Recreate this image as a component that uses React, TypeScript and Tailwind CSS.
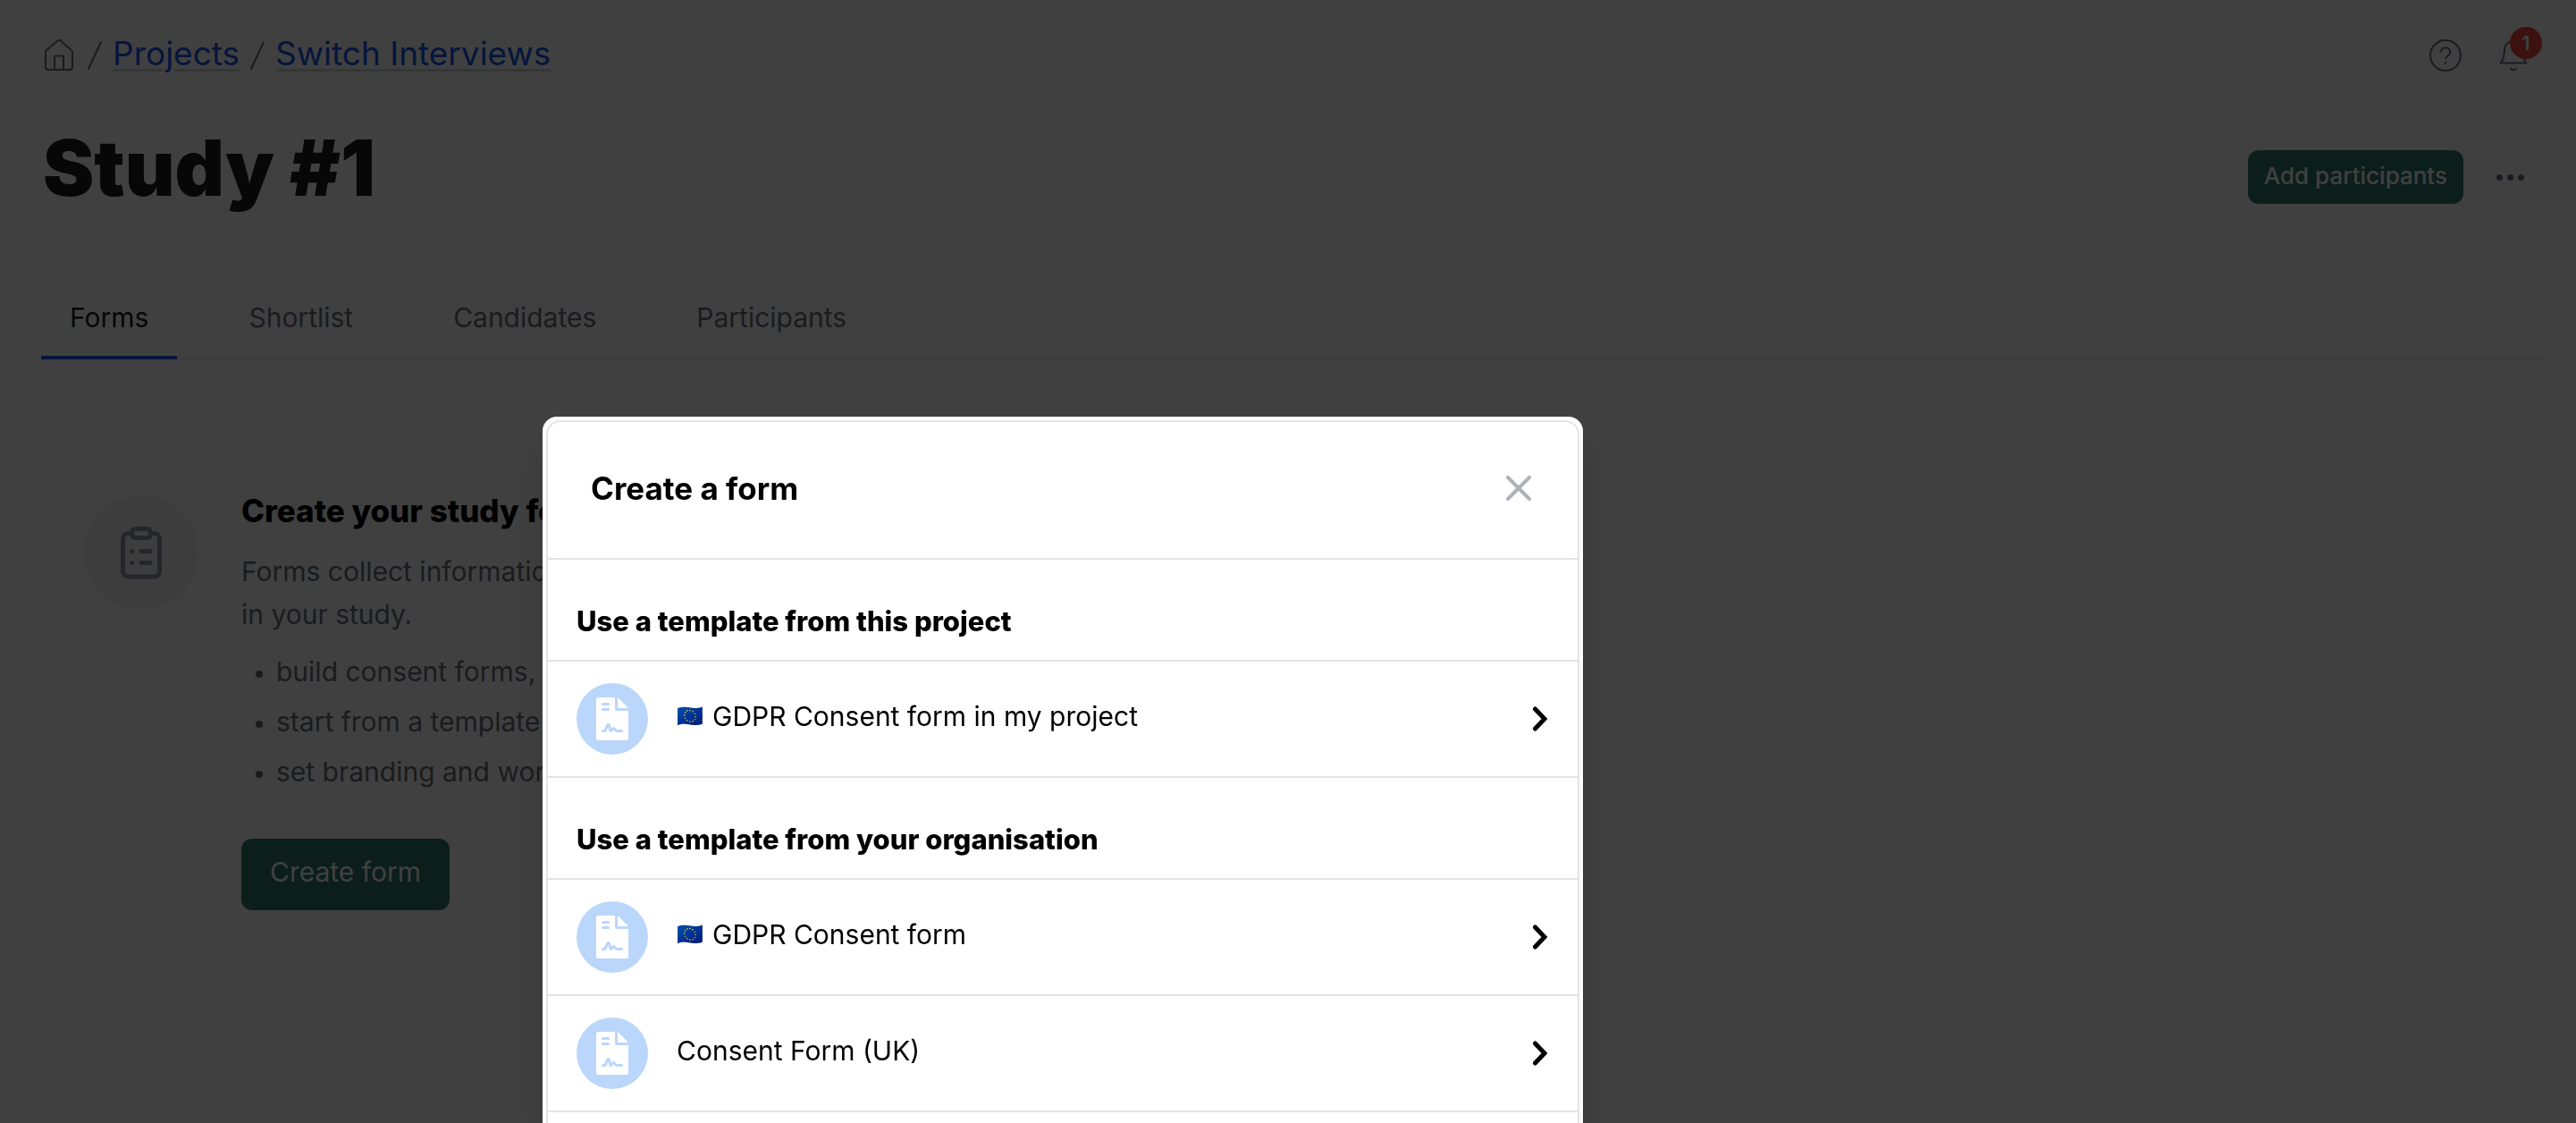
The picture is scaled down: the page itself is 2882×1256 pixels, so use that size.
const tabs = ["Forms", "Shortlist", "Candidates", "Participants"];

const sections = [
  {
    title: "Use a template from this project",
    items: [{ flag: true, name: "GDPR Consent form in my project" }],
  },
  {
    title: "Use a template from your organisation",
    items: [
      { flag: true, name: "GDPR Consent form" },
      { flag: false, name: "Consent Form (UK)" },
    ],
  },
];

function HomeIcon() {
  return (
    <svg className="h-9 w-8" viewBox="0 0 32 36" fill="none" stroke="currentColor" strokeWidth="2" strokeLinejoin="round">
      <path d="M14.2 1.7 1.9 12.2A2.6 2.6 0 0 0 1 14.2V31a3 3 0 0 0 3 3h24a3 3 0 0 0 3-3V14.200a2.600 2.600 0 0 0-.9-2L17.800 1.700a2.800 2.800 0 0 0-3.600 0Z" />
      <path d="M11 34V20.500a2 2 0 0 1 2-2h6a2 2 0 0 1 2 2V34" />
    </svg>
  );
}

function Slash() {
  return (
    <svg className="mt-1 h-9 w-4 text-[#6b6e78]" viewBox="0 0 16 36" fill="none" stroke="currentColor" strokeWidth="2" strokeLinecap="round" aria-hidden="true">
      <path d="M1 33 15 3" />
    </svg>
  );
}

function HelpIcon() {
  return (
    <svg className="size-9" viewBox="0 0 36 36" fill="none" stroke="currentColor" strokeWidth="2" strokeLinecap="round">
      <circle cx="18" cy="18" r="17" />
      <path d="M13 13.800c.2-2.600 2.300-4.500 5-4.500 3.100 0 5.200 2.100 5.200 4.900 0 2.300-1.300 3.600-3 4.700-1.400.9-2.200 1.200-2.200 2.400" />
      <circle cx="18" cy="26.300" r="1.300" fill="currentColor" stroke="none" />
    </svg>
  );
}

function BellIcon() {
  return (
    <svg className="h-9 w-8" viewBox="0 0 32 36" fill="none" stroke="currentColor" strokeWidth="2" strokeLinecap="round" strokeLinejoin="round">
      <path d="M1.500 26.500h29c-2.800-3.500-4-6.300-4.300-11.500C26 6.500 22.500 2 16 2S6 6.500 5.800 15c-.2 5.200-1.500 8-4.300 11.500Z" />
      <path d="M13 32.500c1.500 2.500 4.500 2.500 6 0" />
    </svg>
  );
}

function ClipboardIcon() {
  return (
    <svg className="h-16 w-12" viewBox="0 0 48 64" fill="none" stroke="currentColor" strokeWidth="5" strokeLinecap="round" strokeLinejoin="round">
      <path d="M13 10.500H9.500a6 6 0 0 0-6 6V53a6 6 0 0 0 6 6h29a6 6 0 0 0 6-6V16.500a6 6 0 0 0-6-6H35" />
      <rect x="14" y="5.500" width="20" height="10" rx="3" />
      <path d="M13.500 30.500h.1M24 30.500h10M13.500 43.500h.1M24 43.500h10" />
    </svg>
  );
}

function DocumentIcon() {
  return (
    <svg className="h-12 w-9" viewBox="0 0 36 48" fill="none">
      <path d="M2 0h19v13a2 2 0 0 0 2 2h13v31a2 2 0 0 1-2 2H2a2 2 0 0 1-2-2V2a2 2 0 0 1 2-2Z" fill="white" />
      <path d="M24 0 36 12H24Z" fill="white" />
      <path d="M7.500 7.500h6M7.500 13.500h6M7.500 37.500h1.500c2.500 0 2.500-7 4.500-7s1.500 7 3 7 1.500-3 3-3 1.500 3 4 3h5" stroke="#bad6fb" strokeWidth="3" strokeLinecap="round" strokeLinejoin="round" />
    </svg>
  );
}

function Chevron() {
  return (
    <svg className="h-7 w-4" viewBox="0 0 16 28" fill="none" stroke="currentColor" strokeWidth="5" strokeLinecap="round" strokeLinejoin="miter" aria-hidden="true">
      <path d="M2.500 3 13 14 2.500 25" />
    </svg>
  );
}

export default function App() {
  return (
    <div className="min-h-screen bg-white font-['Inter',sans-serif] text-black">
      <div className="pt-[30px] pr-[38px] pl-[46px]">
        <header className="flex h-[60px] items-center justify-between">
          <nav aria-label="Breadcrumb" className="flex items-center gap-3 pl-1 text-[37px] leading-[60px]">
            <a href="#home" aria-label="Home" className="mt-1 mr-1 text-[#6b6e78]">
              <HomeIcon />
            </a>
            <Slash />
            <a href="#projects" className="text-[#1656f0] underline decoration-gray-300 decoration-3 underline-offset-4">
              Projects
            </a>
            <Slash />
            <a href="#switch-interviews" className="text-[#1656f0] underline decoration-gray-300 decoration-3 underline-offset-4">
              Switch Interviews
            </a>
          </nav>
          <div className="mt-1 flex items-center gap-[42px] text-[#6b7082]">
            <button type="button" aria-label="Help">
              <HelpIcon />
            </button>
            <button type="button" aria-label="Notifications" className="relative w-12">
              <BellIcon />
              <span className="absolute -top-3.5 right-0 flex size-9 items-center justify-center rounded-full bg-[#f04844] text-[22px] leading-none font-semibold text-white">
                1
              </span>
            </button>
          </div>
        </header>

        <div className="mt-11 flex h-32 items-center justify-between">
          <h1 className="pb-5 pl-0.5 text-[86px] leading-[108px] font-black text-[#1c1c1e]">Study #1</h1>
          <div className="flex items-center gap-4">
            <button type="button" className="h-[60px] rounded-xl bg-[#2c786c] px-[18px] pb-1 text-[26px] font-medium text-white">
              Add participants
            </button>
            <button type="button" aria-label="More actions" className="flex size-[72px] items-center justify-center gap-[5px] text-[#6b7082]">
              <span className="size-[7px] rounded-full bg-current" />
              <span className="size-[7px] rounded-full bg-current" />
              <span className="size-[7px] rounded-full bg-current" />
            </button>
          </div>
        </div>

        <div role="tablist" className="mt-[69px] flex gap-12 border-b-2 border-gray-200">
          {tabs.map((tab, i) => (
            <button
              key={tab}
              type="button"
              role="tab"
              aria-selected={i === 0}
              className={
                i === 0
                  ? "-mb-0.5 border-b-4 border-[#1656f0] px-8 pb-[19px] text-[30px] leading-[48px] text-[#18181b]"
                  : "-mb-0.5 border-b-4 border-transparent px-8 pb-[19px] text-[30px] leading-[48px] text-[#6b6e78]"
              }
            >
              {tab}
            </button>
          ))}
        </div>

        <main className="mt-[152px] flex gap-12 pl-12">
          <div className="flex size-32 shrink-0 items-center justify-center rounded-full bg-gray-100 text-[#9297a6]">
            <ClipboardIcon />
          </div>
          <div className="text-[30px] text-[#6b6e78]">
            <h2 className="text-[35px] leading-[34px] font-extrabold text-black">Create your study forms</h2>
            <p className="mt-[27px] leading-[48px]">
              Forms collect information from people
              <br />
              in your study.
            </p>
            <ul className="mt-3 list-none leading-[56px]">
              {["build consent forms, and more", "start from a template", "set branding and wording"].map((item) => (
                <li key={item} className="flex items-center gap-[15px] pl-4">
                  <span className="mt-1.5 size-2 rounded-full bg-current" />
                  {item}
                </li>
              ))}
            </ul>
            <button type="button" className="mt-[47px] h-20 rounded-xl bg-[#2c786c] px-8 pb-1.5 text-white">
              Create form
            </button>
          </div>
        </main>
      </div>

      <div className="fixed inset-0 flex items-stretch overflow-hidden bg-black/75 pt-[466px] pl-[607px]">
        <div
          role="dialog"
          aria-modal="true"
          aria-labelledby="dialog-title"
          className="w-[1164px] rounded-t-2xl bg-white px-1 pt-1 shadow-2xl"
        >
          <div className="h-full rounded-t-2xl border-2 border-b-0 border-[#e2e2e9]">
            <div className="flex h-[154px] items-center justify-between border-b-2 border-[#e2e2e9] pr-[52px] pb-1 pl-12">
              <h2 id="dialog-title" className="text-[35px] leading-[48px] font-bold">
                Create a form
              </h2>
              <button type="button" aria-label="Close" className="text-[#afb2ba]">
                <svg className="size-7" viewBox="0 0 28 28" fill="none" stroke="currentColor" strokeWidth="4" strokeLinecap="round">
                  <path d="m2 2 24 24M26 2 2 26" />
                </svg>
              </button>
            </div>
            {sections.map((section) => (
              <section key={section.title}>
                <h3 className="border-b-2 border-[#e2e2e9] px-8 pt-[45px] pb-[19px] text-[31px] leading-[48px] font-extrabold">
                  {section.title}
                </h3>
                {section.items.map((item) => (
                  <button
                    key={item.name}
                    type="button"
                    className="flex w-full items-center gap-8 border-b-2 border-[#e2e2e9] py-6 pr-[34px] pl-8 text-left"
                  >
                    <span className="flex size-20 items-center justify-center rounded-full bg-[#bad6fb]">
                      <DocumentIcon />
                    </span>
                    <span className="flex flex-1 items-center gap-2.5 pb-1.5 text-[30px] leading-10">
                      {item.flag && <span className="text-2xl leading-10">🇪🇺</span>}
                      <span>{item.name}</span>
                    </span>
                    <Chevron />
                  </button>
                ))}
              </section>
            ))}
          </div>
        </div>
      </div>
    </div>
  );
}
